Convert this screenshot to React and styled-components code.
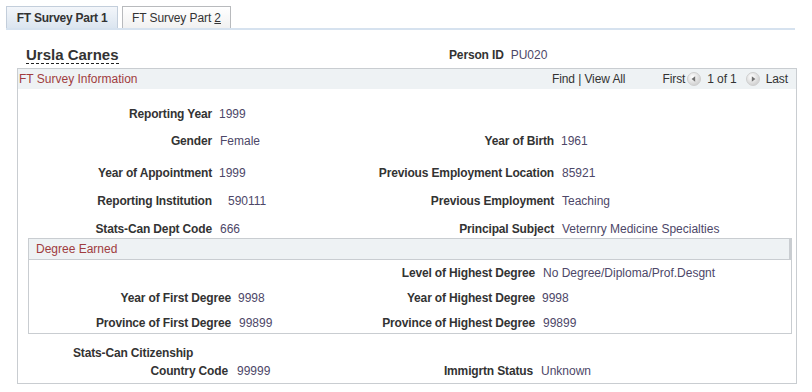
import React from "react";
import styled, { createGlobalStyle } from "styled-components";

const Global = createGlobalStyle`
  html, body { margin: 0; padding: 0; background: #ffffff; }
  body { font-family: Arial, "Liberation Sans", sans-serif; font-size: 12px; color: #333333; }
`;

const Page = styled.div`
  width: 812px;
  height: 392px;
  padding-top: 6px;
  box-sizing: border-box;
`;

const TabBar = styled.div`
  display: flex;
  gap: 4px;
  padding-left: 6px;
  height: 22px;
`;

const Tab = styled.div`
  box-sizing: border-box;
  width: ${(p) => p.$w}px;
  height: 22px;
  display: flex;
  align-items: center;
  justify-content: center;
  border: 1px solid ${(p) => (p.$active ? "#c3cedb" : "#b8babd")};
  border-bottom: none;
  background: ${(p) =>
    p.$active
      ? "linear-gradient(#f3f6fa, #dbe5f0)"
      : "linear-gradient(#ffffff, #f1f1f1)"};
  font-size: 12px;
  font-weight: ${(p) => (p.$active ? "bold" : "normal")};
  letter-spacing: ${(p) => (p.$active ? "-0.25px" : "-0.1px")};
  color: #333333;
  white-space: nowrap;
  u { text-decoration: underline; }
`;

const TabLine = styled.div`
  margin-left: 6px;
  width: 789px;
  height: 2px;
  background: #d6e2ef;
`;

const HeaderRow = styled.div`
  display: grid;
  grid-template-columns: 423px 1fr;
  align-items: end;
  padding: 16px 0 4px 26px;
`;

const Name = styled.div`
  justify-self: start;
  font-size: 15px;
  font-weight: bold;
  line-height: 17px;
  color: #333333;
  border-bottom: 1px dashed #222222;
`;

const PersonId = styled.div`
  display: flex;
  gap: 7px;
  line-height: 14px;
  padding-bottom: 2px;
`;

const Box = styled.div`
  margin-left: 17px;
  width: 780px;
  box-sizing: border-box;
  border: 1px solid #c9cdd1;
  padding-bottom: ${(p) => p.$pb || 0}px;
`;

const SubBox = styled(Box)`
  margin: ${(p) => p.$mt}px 4px 0 10px;
  width: auto;
`;

const BoxHeader = styled.div`
  height: 20px;
  display: flex;
  align-items: center;
  background: #eef2f4;
  padding-left: ${(p) => p.$pl}px;
  padding-right: 8px;
  ${(p) => p.$divider && "border-bottom: 1px solid #c9cdd1; border-right: 2px solid #c9cdd1;"}
`;

const Title = styled.div`
  color: #a03c3e;
  font-size: 12px;
  flex: 1;
`;

const Nav = styled.div`
  display: flex;
  align-items: center;
  color: #333333;
  font-size: 12px;
  white-space: nowrap;
  letter-spacing: -0.1px;
`;

const NavText = styled.span`
  margin-left: ${(p) => p.$ml || 0}px;
`;

const NavIcon = styled.svg`
  width: 14px;
  height: 14px;
  margin: 0 ${(p) => p.$mr}px 0 ${(p) => p.$ml}px;
`;

const Row = styled.div`
  display: grid;
  grid-template-columns: ${(p) => p.$cols};
  margin-top: ${(p) => p.$mt}px;
  line-height: 14px;
  padding-left: ${(p) => p.$pl || 0}px;
`;

const Label = styled.div`
  font-weight: bold;
  text-align: ${(p) => (p.$left ? "left" : "right")};
  padding-right: ${(p) => (p.$left ? 0 : 7)}px;
  color: #333333;
  letter-spacing: -0.15px;
  white-space: nowrap;
`;

const Value = styled.div`
  color: #4d4768;
  padding-left: ${(p) => p.$pad || 0}px;
  white-space: nowrap;
`;

const Empty = styled.div``;

function Arrow({ dir, ml, mr }) {
  return (
    <NavIcon viewBox="0 0 14 14" $ml={ml} $mr={mr}>
      <defs>
        <radialGradient id={"g" + dir} cx="40%" cy="35%" r="70%">
          <stop offset="0%" stopColor="#ffffff" />
          <stop offset="100%" stopColor="#cccccc" />
        </radialGradient>
      </defs>
      <circle cx="7" cy="7" r="6.5" fill={"url(#g" + dir + ")"} stroke="#cfcfcf" />
      {dir === "l" ? (
        <path d="M4.6 7 L8.2 4.2 L8.2 9.8 Z" fill="#707070" />
      ) : (
        <path d="M9.4 7 L5.8 4.2 L5.8 9.8 Z" fill="#707070" />
      )}
    </NavIcon>
  );
}

const MAIN = "201px 150px 192px 1fr";
const DEG = "209px 130px 174px 1fr";
const CIT = "217px 140px 165px 1fr";

export default function App() {
  return (
    <>
      <Global />
      <Page>
        <TabBar>
          <Tab $active $w={112}>FT Survey Part 1</Tab>
          <Tab $w={109}>
            FT Survey Part&nbsp;<u>2</u>
          </Tab>
        </TabBar>
        <TabLine />
        <HeaderRow>
          <Name>Ursla Carnes</Name>
          <PersonId>
            <Label $left>Person ID</Label>
            <Value>PU020</Value>
          </PersonId>
        </HeaderRow>
        <Box $pb={5}>
          <BoxHeader $pl={1}>
            <Title>FT Survey Information</Title>
            <Nav>
              <NavText>Find | View All</NavText>
              <NavText $ml={37}>First</NavText>
              <Arrow dir="l" ml={2} mr={6} />
              <NavText>1 of 1</NavText>
              <Arrow dir="r" ml={9} mr={6} />
              <NavText>Last</NavText>
            </Nav>
          </BoxHeader>

          <Row $cols={MAIN} $mt={18}>
            <Label>Reporting Year</Label>
            <Value>1999</Value>
          </Row>
          <Row $cols={MAIN} $mt={13}>
            <Label>Gender</Label>
            <Value $pad={1}>Female</Value>
            <Label>Year of Birth</Label>
            <Value>1961</Value>
          </Row>
          <Row $cols={MAIN} $mt={18}>
            <Label>Year of Appointment</Label>
            <Value>1999</Value>
            <Label>Previous Employment Location</Label>
            <Value $pad={1}>85921</Value>
          </Row>
          <Row $cols={MAIN} $mt={14}>
            <Label>Reporting Institution</Label>
            <Value $pad={9}>590111</Value>
            <Label>Previous Employment</Label>
            <Value $pad={1}>Teaching</Value>
          </Row>
          <Row $cols={MAIN} $mt={14}>
            <Label>Stats-Can Dept Code</Label>
            <Value $pad={1}>666</Value>
            <Label>Principal Subject</Label>
            <Value $pad={1}>Veternry Medicine Specialties</Value>
          </Row>

          <SubBox $mt={2} $pb={3}>
            <BoxHeader $pl={7} $divider>
              <Title>Degree Earned</Title>
            </BoxHeader>
            <Row $cols={DEG} $mt={6}>
              <Empty />
              <Empty />
              <Label>Level of Highest Degree</Label>
              <Value $pad={1}>No Degree/Diploma/Prof.Desgnt</Value>
            </Row>
            <Row $cols={DEG} $mt={11}>
              <Label>Year of First Degree</Label>
              <Value>9998</Value>
              <Label>Year of Highest Degree</Label>
              <Value>9998</Value>
            </Row>
            <Row $cols={DEG} $mt={11}>
              <Label>Province of First Degree</Label>
              <Value $pad={1}>99899</Value>
              <Label>Province of Highest Degree</Label>
              <Value $pad={1}>99899</Value>
            </Row>
          </SubBox>

          <Row $cols="1fr" $mt={12} $pl={55}>
            <Label $left>Stats-Can Citizenship</Label>
          </Row>
          <Row $cols={CIT} $mt={4}>
            <Label>Country Code</Label>
            <Value $pad={2}>99999</Value>
            <Label>Immigrtn Status</Label>
            <Value $pad={1}>Unknown</Value>
          </Row>
        </Box>
      </Page>
    </>
  );
}
